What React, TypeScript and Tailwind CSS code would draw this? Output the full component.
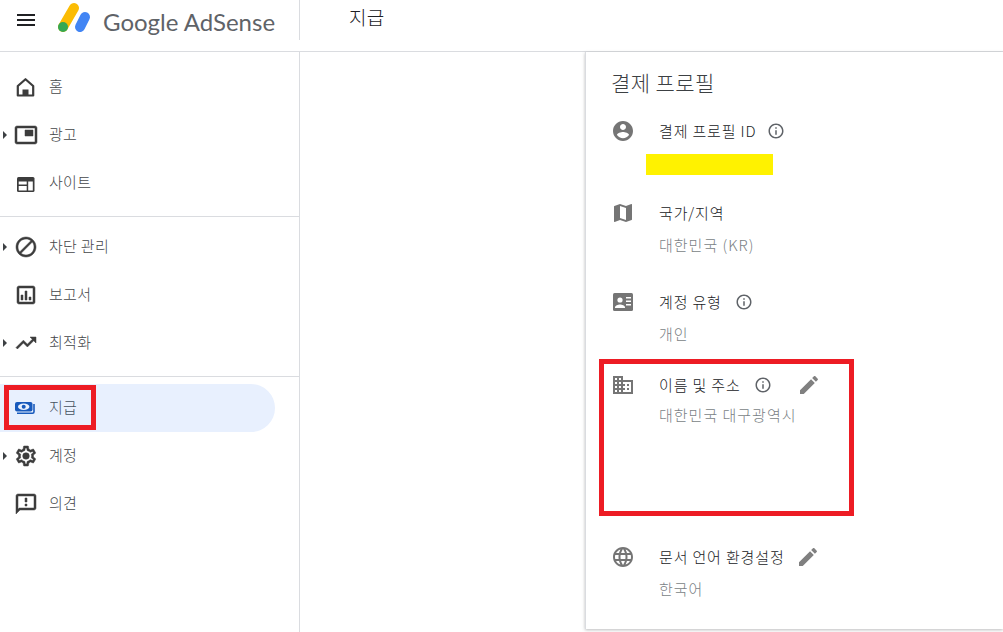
import React from "react";

const P = {
  menu: "M3 18h18v-2H3v2zm0-5h18v-2H3v2zm0-7v2h18V6H3z",
  pip: "M19 7h-8v6h8V7zm2-4H3c-1.1 0-2 .9-2 2v14c0 1.1.9 2 2 2h18c1.1 0 2-.9 2-2V5c0-1.1-.9-2-2-2zm0 16.01H3V4.98h18v14.03z",
  block: "M12 2C6.48 2 2 6.48 2 12s4.48 10 10 10 10-4.48 10-10S17.52 2 12 2zM4 12c0-4.42 3.58-8 8-8 1.85 0 3.55.63 4.9 1.69L5.69 16.9C4.63 15.55 4 13.85 4 12zm8 8c-1.85 0-3.55-.63-4.9-1.69L18.31 7.1C19.37 8.45 20 10.15 20 12c0 4.42-3.58 8-8 8z",
  chart: "M19 3H5c-1.1 0-2 .9-2 2v14c0 1.1.9 2 2 2h14c1.1 0 2-.9 2-2V5c0-1.1-.9-2-2-2zm0 16H5V5h14v14zM7 12h2v5H7zm4-4h2v9h-2zm4 6h2v3h-2z",
  trend: "M16 6l2.29 2.29-4.88 4.88-4-4L2 16.59 3.41 18l6-6 4 4 6.3-6.29L22 12V6z",
  gear: "M19.43 12.98c.04-.32.07-.64.07-.98s-.03-.66-.07-.98l2.11-1.65c.19-.15.24-.42.12-.64l-2-3.46c-.12-.22-.39-.3-.61-.22l-2.49 1c-.52-.4-1.08-.73-1.69-.98l-.38-2.65C14.46 2.18 14.25 2 14 2h-4c-.25 0-.46.18-.49.42l-.38 2.65c-.61.25-1.17.59-1.69.98l-2.49-1c-.23-.09-.49 0-.61.22l-2 3.46c-.13.22-.07.49.12.64l2.11 1.65c-.04.32-.07.65-.07.98s.03.66.07.98l-2.11 1.65c-.19.15-.24.42-.12.64l2 3.46c.12.22.39.3.61.22l2.49-1c.52.4 1.08.73 1.69.98l.38 2.65c.03.24.24.42.49.42h4c.25 0 .46-.18.49-.42l.38-2.65c.61-.25 1.17-.59 1.69-.98l2.49 1c.23.09.49 0 .61-.22l2-3.46c.12-.22.07-.49-.12-.64l-2.11-1.65zM17.45 11.27c.04.31.05.52.05.73 0 .21-.02.43-.05.73l-.14 1.13.89.7 1.08.84-.7 1.21-1.27-.51-1.04-.42-.9.68c-.43.32-.84.56-1.25.73l-1.06.43-.16 1.13-.2 1.35h-1.4l-.19-1.35-.16-1.13-1.06-.43c-.43-.18-.83-.41-1.23-.71l-.91-.7-1.06.43-1.27.51-.7-1.21 1.08-.84.89-.7-.14-1.13c-.03-.31-.05-.54-.05-.74s.02-.43.05-.73l.14-1.13-.89-.7-1.08-.84.7-1.21 1.27.51 1.04.42.9-.68c.43-.32.84-.56 1.25-.73l1.06-.43.16-1.13.2-1.35h1.39l.19 1.35.16 1.13 1.06.43c.43.18.83.41 1.23.71l.91.7 1.06-.43 1.27-.51.7 1.21-1.07.85-.89.7.14 1.13z M12 8.7a3.3 3.3 0 1 0 0 6.6 3.3 3.3 0 0 0 0-6.6z",
  feedback: "M20 2H4c-1.1 0-1.99.9-1.99 2L2 22l4-4h14c1.1 0 2-.9 2-2V4c0-1.1-.9-2-2-2zm0 14H5.17L4 17.17V4h16v12zm-9-4h2v2h-2zm0-6h2v4h-2z",
  account: "M12 2C6.48 2 2 6.48 2 12s4.48 10 10 10 10-4.48 10-10S17.52 2 12 2zm0 3c1.66 0 3 1.34 3 3s-1.34 3-3 3-3-1.34-3-3 1.34-3 3-3zm0 14.2c-2.5 0-4.71-1.28-6-3.22.03-1.99 4-3.08 6-3.08 1.99 0 5.97 1.09 6 3.08-1.29 1.94-3.5 3.22-6 3.22z",
  map: "M20.5 3l-.16.03L15 5.1 9 3 3.36 4.9c-.21.07-.36.25-.36.48V20.5c0 .28.22.5.5.5l.16-.03L9 18.9l6 2.1 5.64-1.9c.21-.07.36-.25.36-.48V3.5c0-.28-.22-.5-.5-.5zM15 19l-6-2.11V5l6 2.11V19z",
  domain: "M12 7V3H2v18h20V7H12zM6 19H4v-2h2v2zm0-4H4v-2h2v2zm0-4H4V9h2v2zm0-4H4V5h2v2zm4 12H8v-2h2v2zm0-4H8v-2h2v2zm0-4H8V9h2v2zm0-4H8V5h2v2zm10 12h-8v-2h2v-2h-2v-2h2v-2h-2V9h8v10zm-2-8h-2v2h2v-2zm0 4h-2v2h2v-2z",
  lang: "M11.99 2C6.47 2 2 6.48 2 12s4.47 10 9.99 10C17.52 22 22 17.52 22 12S17.52 2 11.99 2zm6.93 6h-2.95c-.32-1.25-.78-2.45-1.38-3.56 1.84.63 3.37 1.91 4.33 3.56zM12 4.04c.83 1.2 1.48 2.53 1.91 3.96h-3.82c.43-1.43 1.08-2.76 1.91-3.96zM4.26 14C4.1 13.36 4 12.69 4 12s.1-1.36.26-2h3.38c-.08.66-.14 1.32-.14 2 0 .68.06 1.34.14 2H4.26zm.82 2h2.95c.32 1.25.78 2.45 1.38 3.56-1.84-.63-3.37-1.9-4.33-3.56zm2.95-8H5.08c.96-1.66 2.49-2.93 4.33-3.56C8.81 5.55 8.35 6.75 8.03 8zM12 19.96c-.83-1.2-1.48-2.53-1.91-3.96h3.82c-.43 1.43-1.08 2.76-1.91 3.96zM14.34 14H9.66c-.09-.66-.16-1.32-.16-2 0-.68.07-1.35.16-2h4.68c.09.65.16 1.32.16 2 0 .68-.07 1.34-.16 2zm.25 5.56c.6-1.11 1.06-2.31 1.38-3.56h2.95c-.96 1.65-2.49 2.93-4.33 3.56zM16.36 14c.08-.66.14-1.32.14-2 0-.68-.06-1.34-.14-2h3.38c.16.64.26 1.31.26 2s-.1 1.36-.26 2h-3.38z",
  edit: "M3 17.25V21h3.75L17.81 9.94l-3.75-3.75L3 17.25zM20.71 7.04c.39-.39.39-1.02 0-1.41l-2.34-2.34c-.39-.39-1.02-.39-1.41 0l-1.83 1.83 3.75 3.75 1.83-1.83z",
  info: "M11 7h2v2h-2zm0 4h2v6h-2zm1-9C6.48 2 2 6.48 2 12s4.48 10 10 10 10-4.48 10-10S17.52 2 12 2zm0 18c-4.41 0-8-3.59-8-8s3.59-8 8-8 8 3.59 8 8-3.59 8-8 8z",
};

function Icon({ d, className, bold }: { d: string; className: string; bold?: boolean }) {
  return (
    <svg
      viewBox="0 0 24 24"
      className={className}
      fill="currentColor"
      stroke={bold ? "currentColor" : "none"}
      strokeWidth={bold ? 0.5 : 0}
      aria-hidden="true"
    >
      <path d={d} />
    </svg>
  );
}

function HomeIcon() {
  return (
    <svg viewBox="0 0 24 24" className="w-6 h-6 shrink-0" aria-hidden="true">
      <path d="M11.5 4.2 3.8 11v9.5h15.4V11z" fill="none" stroke="currentColor" strokeWidth="2.2" strokeLinejoin="round" />
      <rect x="8.5" y="14.5" width="6" height="6" fill="currentColor" />
    </svg>
  );
}

function PipIcon() {
  return <Icon d={P.pip} bold className="w-6 h-6 shrink-0" />;
}

function WebIcon() {
  return (
    <svg viewBox="0 0 24 24" className="w-6 h-6 shrink-0" aria-hidden="true">
      <rect x="3" y="6" width="17.5" height="15" rx="1.5" fill="currentColor" />
      <path d="M4.7 10.5h8v3h-8zM4.7 15h8v4.5h-8zM14.2 10.5h4.6v9h-4.6z" fill="#fff" />
    </svg>
  );
}

function PayIcon() {
  return (
    <svg viewBox="0 0 24 24" className="w-6 h-6 shrink-0" aria-hidden="true">
      <rect x="1" y="6" width="17.5" height="9.5" rx="2" fill="currentColor" />
      <ellipse cx="9.7" cy="10.7" rx="5.7" ry="3.2" fill="#e8f0fe" />
      <circle cx="9.7" cy="10.7" r="2" fill="currentColor" />
      <path d="M3 17.3h15.5c1 0 1.5-.5 1.5-1.5V8" fill="none" stroke="currentColor" strokeWidth="1.6" />
    </svg>
  );
}

function CardIcon() {
  return (
    <svg viewBox="0 0 24 24" className="w-6 h-6 text-[#757575] shrink-0" aria-hidden="true">
      <rect x="2" y="3" width="20" height="18" rx="1.5" fill="currentColor" />
      <circle cx="9" cy="10" r="2.6" fill="#fff" />
      <path d="M4 17.5c0-2 3-3 5-3s5 1 5 3V18H4z" fill="#fff" />
      <path d="M15 7h5v1.5h-5zM15 10.5h5V12h-5zM15 14h5v1.5h-5z" fill="#fff" />
    </svg>
  );
}

function Logo() {
  return (
    <svg viewBox="0 0 34 34" className="w-[34px] h-[34px] shrink-0" aria-hidden="true">
      <line x1="5" y1="27" x2="16" y2="8" stroke="#fbbc04" strokeWidth="10" strokeLinecap="round" />
      <circle cx="5" cy="27" r="5" fill="#34a853" />
      <line x1="22" y1="27" x2="27" y2="17" stroke="#4285f4" strokeWidth="10" strokeLinecap="round" />
    </svg>
  );
}

function NavItem({ icon, label, arrow, active }: { icon: React.ReactNode; label: string; arrow?: boolean; active?: boolean }) {
  return (
    <div
      className={
        active
          ? "h-12 w-[275px] flex items-center rounded-r-full bg-[#e8f0fe] text-[#185abc]"
          : "h-12 w-[275px] flex items-center text-[#3c3c3c]"
      }
    >
      <div className="w-[14px] shrink-0 flex items-center justify-start pl-[3px]">
        {arrow && <div className="w-0 h-0 border-y-[4px] border-y-transparent border-l-[4px] border-l-[#3c4043]" />}
      </div>
      {icon}
      <span className={"ml-[11px] text-[15px] leading-5 tracking-[0.3px] font-light -translate-y-[1px] " + (active ? "text-[#45525f]" : "text-[#45474a]")}>
        {label}
      </span>
    </div>
  );
}

function InfoIcon() {
  return <Icon d={P.info} className="w-[18px] h-[18px] text-[#5f6368] shrink-0" />;
}

function EditIcon() {
  return <Icon d={P.edit} className="w-6 h-6 text-[#808080] shrink-0" />;
}

function Row({
  icon,
  label,
  value,
  after,
  className,
}: {
  icon: React.ReactNode;
  label: string;
  value?: React.ReactNode;
  after?: React.ReactNode;
  className?: string;
}) {
  return (
    <div className={"flex " + (className ?? "")}>
      <div className="w-[48px] h-6 flex items-center">{icon}</div>
      <div className="flex flex-col">
        <div className="h-6 flex items-center text-[15px] text-[#202124]">
          <span className="tracking-[0.85px] font-light">{label}</span>
          {after}
        </div>
        {value}
      </div>
    </div>
  );
}

function Value({ children, className }: { children: React.ReactNode; className: string }) {
  return <div className={"h-5 leading-5 text-[15px] tracking-[1px] font-light text-[#7a7f85] " + className}>{children}</div>;
}

export default function App() {
  return (
    <div
      className="relative w-[1003px] h-[632px] overflow-hidden bg-white flex flex-col"
      style={{ fontFamily: '"Noto Sans CJK KR", Roboto, sans-serif' }}
    >
      <header className="h-[52px] shrink-0 border-b border-[#dadce0] flex items-start">
        <div className="w-[300px] h-10 shrink-0 flex items-center border-r border-[#dadce0]">
          <Icon d={P.menu} className="ml-[14px] w-6 h-6 text-[#202124] shrink-0" />
          <div className="ml-[20px] self-start"><Logo /></div>
          <span
            className="ml-[11px] text-[24px] leading-none text-[#5f6368] whitespace-nowrap mt-[3px]"
            style={{ fontFamily: 'Lato, Roboto, sans-serif' }}
          >
            Google AdSense
          </span>
        </div>
        <div className="ml-[49px] h-[35px] flex items-center text-[19px] tracking-[0.3px] font-light text-[#202124]">지급</div>
      </header>

      <div className="flex-1 flex min-h-0">
        <nav className="w-[300px] shrink-0 border-r border-[#dadce0] flex flex-col">
          <div className="pt-[11px] pb-[9px] border-b border-[#dadce0]">
            <NavItem icon={<HomeIcon />} label="홈" />
            <NavItem icon={<PipIcon />} label="광고" arrow />
            <NavItem icon={<WebIcon />} label="사이트" />
          </div>
          <div className="pt-[6px] pb-[9px] border-b border-[#dadce0]">
            <NavItem icon={<Icon d={P.block} bold className="w-6 h-6 shrink-0" />} label="차단 관리" arrow />
            <NavItem icon={<Icon d={P.chart} bold className="w-6 h-6 shrink-0" />} label="보고서" />
            <NavItem icon={<Icon d={P.trend} bold className="w-6 h-6 shrink-0" />} label="최적화" arrow />
          </div>
          <div className="pt-[7px]">
            <NavItem icon={<PayIcon />} label="지급" active />
            <NavItem icon={<Icon d={P.gear} bold className="w-6 h-6 shrink-0" />} label="계정" arrow />
            <NavItem icon={<Icon d={P.feedback} bold className="w-6 h-6 shrink-0" />} label="의견" />
          </div>
        </nav>

        <div className="flex-1" />

        <section className="w-[418px] shrink-0 h-[577px] bg-white border-l border-[#dadce0] shadow-[0_1px_3px_rgba(60,64,67,0.35)] pl-[25px] pt-[15px]">
          <h2 className="h-[30px] leading-[30px] text-[21px] tracking-[0.4px] font-light text-[#3c4043]">결제 프로필</h2>
          <Row
            className="mt-[22px]"
            icon={<Icon d={P.account} className="w-6 h-6 text-[#757575]" />}
            label="결제 프로필 ID"
            after={<div className="ml-[11px]"><InfoIcon /></div>}
          />
          <div className="ml-[35px] mt-[11px] w-[127px] h-[21px] bg-[#fff200]" />
          <Row
            className="mt-[26px]"
            icon={<Icon d={P.map} className="w-6 h-6 text-[#757575]" />}
            label="국가/지역"
            value={<Value className="mt-[10px]">대한민국 (KR)</Value>}
          />
          <Row
            className="mt-[35px]"
            icon={<CardIcon />}
            label="계정 유형"
            after={<div className="ml-[13px]"><InfoIcon /></div>}
            value={<Value className="mt-[10px]">개인</Value>}
          />
          <Row
            className="mt-[29px]"
            icon={<Icon d={P.domain} className="w-6 h-6 text-[#757575]" />}
            label="이름 및 주소"
            after={
              <>
                <div className="ml-[13px]"><InfoIcon /></div>
                <div className="ml-[25px]"><EditIcon /></div>
              </>
            }
            value={<Value className="mt-[8px]">대한민국 대구광역시</Value>}
          />
          <Row
            className="mt-[120px]"
            icon={<Icon d={P.lang} className="w-6 h-6 text-[#757575]" />}
            label="문서 언어 환경설정"
            after={<div className="ml-[11px]"><EditIcon /></div>}
            value={<Value className="mt-[10px]">한국어</Value>}
          />
        </section>
      </div>

      <div className="absolute left-[4px] top-[385px] w-[92px] h-[45px] border-[5px] border-[#ed1c24]" />
      <div className="absolute left-[599px] top-[359px] w-[255px] h-[157px] border-[5px] border-[#ed1c24]" />
    </div>
  );
}
